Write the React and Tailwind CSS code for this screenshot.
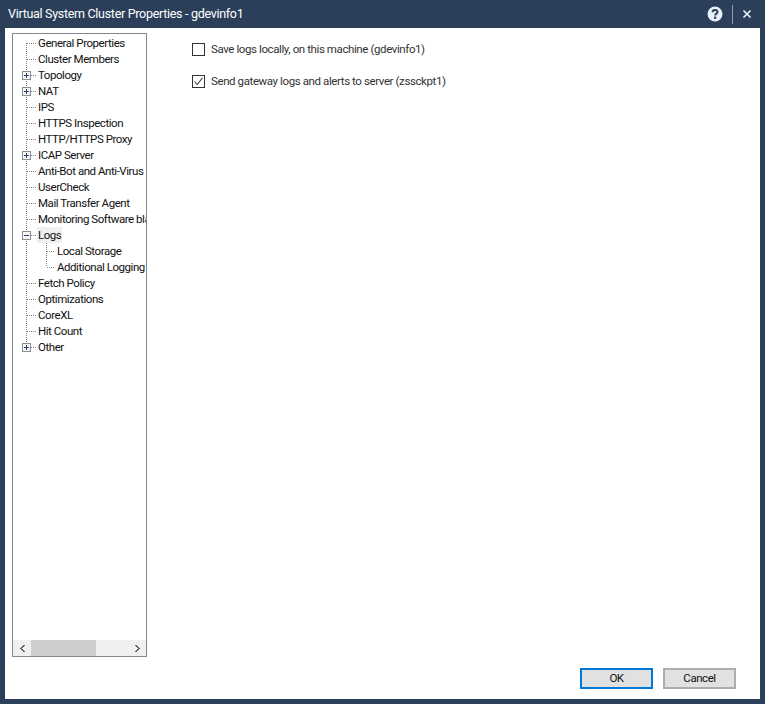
import { X } from 'lucide-react';

const TREE = [
  { label: 'General Properties' },
  { label: 'Cluster Members' },
  { label: 'Topology', box: 'plus' },
  { label: 'NAT', box: 'plus' },
  { label: 'IPS' },
  { label: 'HTTPS Inspection' },
  { label: 'HTTP/HTTPS Proxy' },
  { label: 'ICAP Server', box: 'plus' },
  { label: 'Anti-Bot and Anti-Virus' },
  { label: 'UserCheck' },
  { label: 'Mail Transfer Agent' },
  { label: 'Monitoring Software blade' },
  { label: 'Logs', box: 'minus', selected: true },
  { label: 'Local Storage', child: true },
  { label: 'Additional Logging', child: true, lastChild: true },
  { label: 'Fetch Policy' },
  { label: 'Optimizations' },
  { label: 'CoreXL' },
  { label: 'Hit Count' },
  { label: 'Other', box: 'plus', last: true },
];

// connector lines of one tree row, drawn on the row's 16px pixel grid
function Connector({ item, first }) {
  const w = item.child ? 43 : 24;
  return (
    <svg width={w} height="16" className="shrink-0" shapeRendering="crispEdges">
      <g stroke="#7f7f7f" strokeDasharray="1 1" fill="none">
        <path d={`M13.5 ${first ? 8 : 0}V${item.last ? 8 : 16}`} />
        {!item.child && <path d="M14 8.5H23" />}
        {item.child && <path d={`M33.5 0V${item.lastChild ? 8 : 16}`} />}
        {item.child && <path d="M34 8.5H42" />}
      </g>
      {item.box && (
        <g>
          <rect x="9.5" y="4.5" width="8" height="8" fill="#f4f4f4" stroke="#8e8f8f" />
          <path d="M11 8.5H16" stroke="#2b3f7c" fill="none" />
          {item.box === 'plus' && <path d="M13.5 6V11" stroke="#2b3f7c" fill="none" />}
        </g>
      )}
    </svg>
  );
}

function TreeRow({ item, first }) {
  return (
    <div className="flex h-4 items-center whitespace-nowrap">
      <Connector item={item} first={first} />
      <span className={`h-4 px-[1px] leading-4 ${item.selected ? 'bg-[#f0f0f0]' : ''}`}>{item.label}</span>
    </div>
  );
}

function Check({ checked, label }) {
  return (
    <label className="flex h-4 items-center gap-[6px]">
      <span className="flex h-[13px] w-[13px] items-center justify-center border border-[#333333] bg-white">
        {checked && (
          <svg width="11" height="11" viewBox="0 0 11 11">
            <path d="M1.5 5.5L4.2 8.5L9.5 1.8" stroke="#444444" strokeWidth="1.1" fill="none" />
          </svg>
        )}
      </span>
      <span className="mt-[2px] tracking-[-0.4px] text-[#333333]">{label}</span>
    </label>
  );
}

function Arrow({ dir }) {
  return (
    <svg width="7" height="9" viewBox="0 0 7 9" shapeRendering="crispEdges">
      <path d={dir === 'left' ? 'M5.5 1L2 4.5L5.5 8' : 'M1.5 1L5 4.5L1.5 8'} stroke="#606060" strokeWidth="2" fill="none" />
    </svg>
  );
}

export default function App() {
  return (
    <div className="flex h-[704px] w-[765px] flex-col bg-[#2b3f5a] px-[5px] pb-[5px] font-['Roboto',sans-serif] text-[11.5px] tracking-[-0.45px] text-[#111111]">
      <div className="flex h-[28px] shrink-0 items-center pr-[5px] pl-[3px] text-[12.5px] tracking-[-0.3px] text-white">
        <span>Virtual System Cluster Properties - gdevinfo1</span>
        <div className="ml-auto flex items-center">
          <svg width="16" height="16" viewBox="0 0 16 16">
            <circle cx="8" cy="8" r="7.5" fill="#eaf0f8" />
            <path d="M5.6 6.2C5.6 4.8 6.7 4 8 4C9.4 4 10.5 4.8 10.5 6C10.5 7.6 8.2 7.6 8.2 9.4" stroke="#2b3f5a" strokeWidth="2" fill="none" />
            <rect x="7" y="10.6" width="2.3" height="2.2" fill="#2b3f5a" />
          </svg>
          <span className="ml-[9px] h-[19px] w-px bg-[#8e9bad]" />
          <X size={12} strokeWidth={3.5} className="mr-[2px] ml-[8px] text-[#eaf0f8]" />
        </div>
      </div>
      <div className="flex min-h-0 flex-1 flex-col bg-white">
        <div className="flex min-h-0 flex-1 pt-[5px] pl-[7px]">
          <div className="flex h-[624px] w-[135px] shrink-0 flex-col border border-[#828790]">
            <div className="min-h-0 flex-1 overflow-hidden pt-[1px]">
              {TREE.map((item, i) => (
                <TreeRow key={item.label} item={item} first={i === 0} />
              ))}
            </div>
            <div className="flex h-[16px] shrink-0 items-center bg-[#f0f0f0]">
              <div className="flex w-[18px] justify-center"><Arrow dir="left" /></div>
              <div className="h-full w-[65px] bg-[#cdcdcd]" />
              <div className="ml-auto flex w-[17px] justify-center"><Arrow dir="right" /></div>
            </div>
          </div>
          <div className="flex flex-col gap-4 pt-[8px] pl-[45px]">
            <Check label="Save logs locally, on this machine (gdevinfo1)" />
            <Check checked label="Send gateway logs and alerts to server (zssckpt1)" />
          </div>
        </div>
        <div className="flex h-[31px] shrink-0 items-start justify-end gap-[10px] pr-[24px]">
          <button className="h-[21px] w-[73px] border-2 border-[#0078d7] bg-[#e1e1e1]">OK</button>
          <button className="h-[21px] w-[73px] border-2 border-[#adadad] bg-[#e1e1e1]">Cancel</button>
        </div>
      </div>
    </div>
  );
}
